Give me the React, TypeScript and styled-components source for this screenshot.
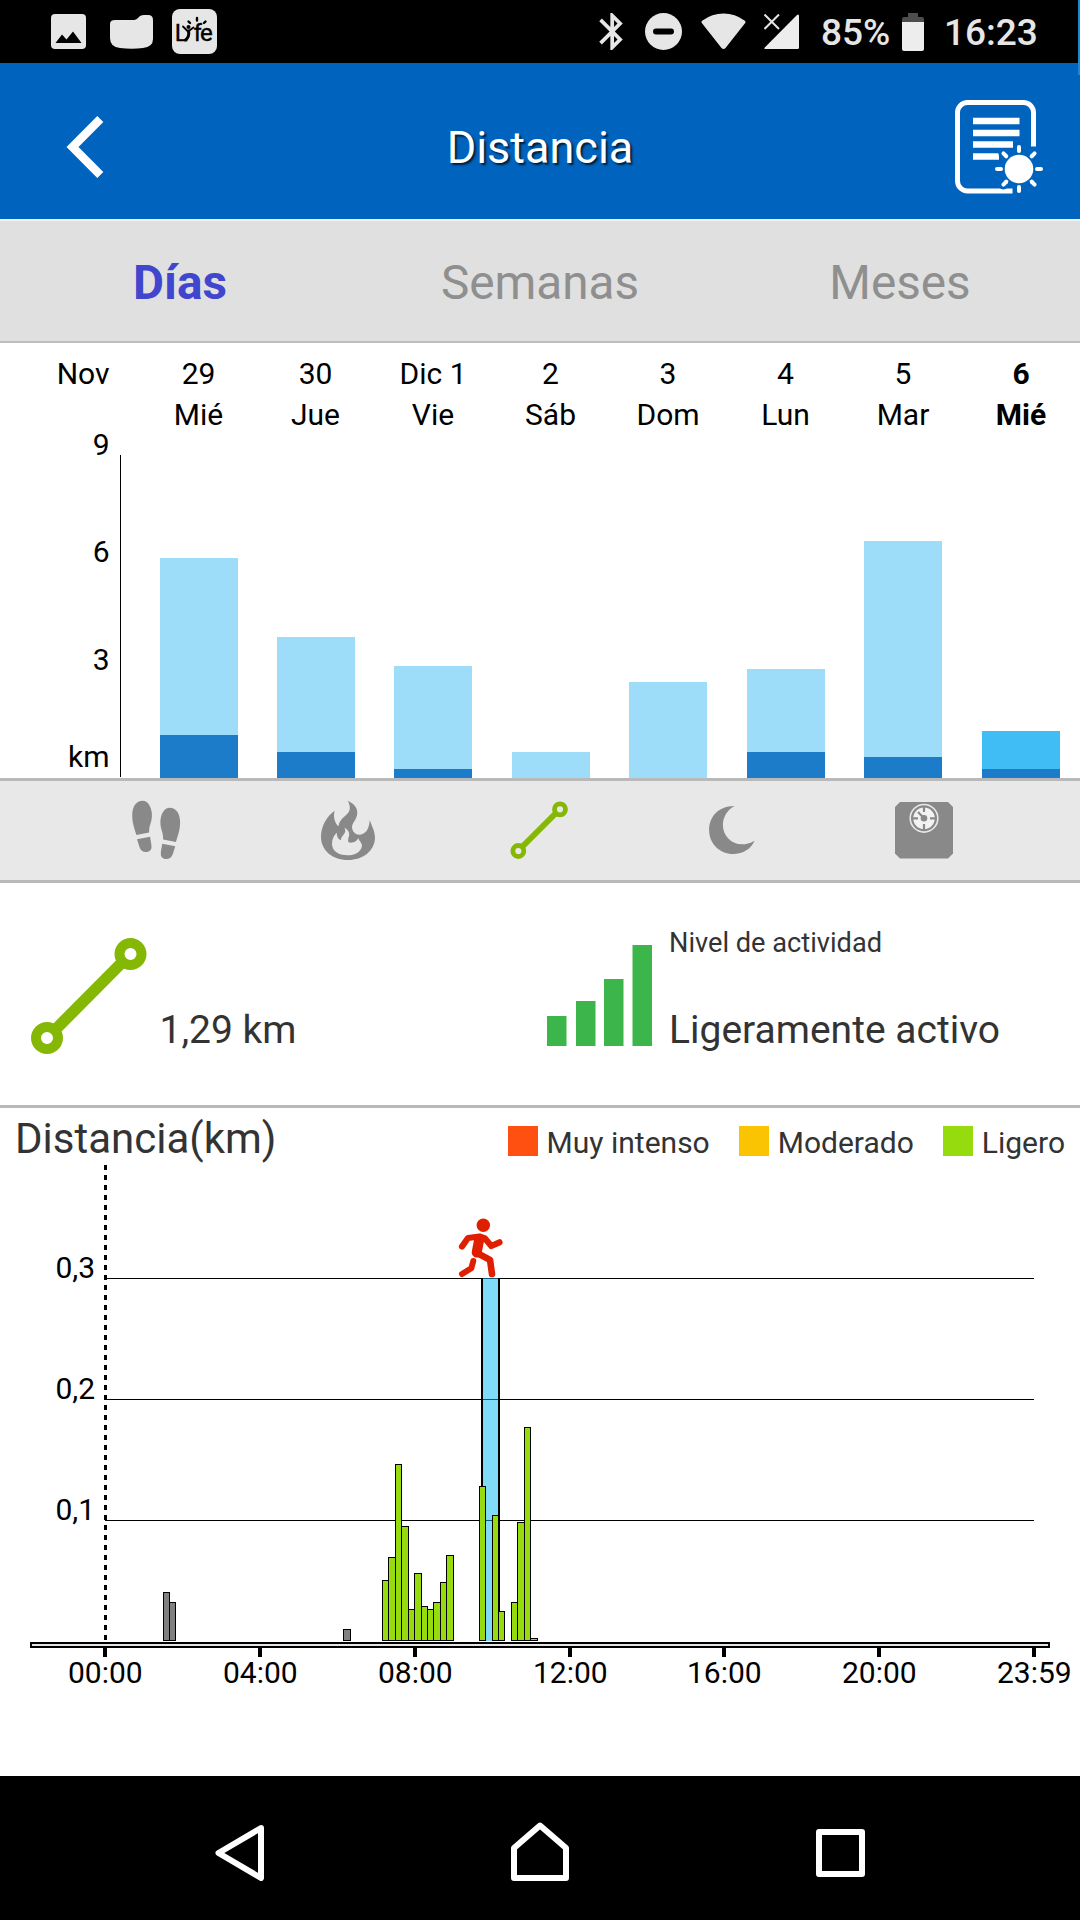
import React from "react";
import styled, { createGlobalStyle } from "styled-components";

const GlobalStyle = createGlobalStyle`
  * { box-sizing: border-box; }
  body { margin: 0; background: #fff; font-family: Roboto, "Liberation Sans", sans-serif; }
  svg { display: block; flex: none; }
`;

const Screen = styled.div`
  width: 1080px;
  height: 1920px;
  display: flex;
  flex-direction: column;
  position: relative;
  overflow: hidden;
  background: #fff;
  color: #000;
`;

const EdgeHandle = styled.div`
  position: absolute;
  top: 0;
  right: 0;
  width: 2px;
  height: 75px;
  background: #1a8ad6;
`;

/* ---------- Status bar ---------- */

const StatusBar = styled.div`
  height: 63px;
  flex: none;
  display: flex;
  justify-content: space-between;
  background: #000;
  color: #e6e6e6;
  padding: 0 43px 0 51px;
`;

const StatusGroup = styled.div`
  display: flex;
  align-items: center;
  height: 63px;
`;

const StatusIcon = styled.span<{ $gap: number }>`
  margin-left: ${(p) => p.$gap}px;
`;

const StatusText = styled.span<{ $gap: number; $width: number }>`
  margin-left: ${(p) => p.$gap}px;
  width: ${(p) => p.$width}px;
  font-size: 37px;
  font-weight: 500;
  line-height: 44px;
  padding-top: 3px;
  white-space: nowrap;
`;

/* ---------- Header ---------- */

const Header = styled.header`
  height: 156px;
  flex: none;
  display: grid;
  grid-template-columns: 1fr auto 1fr;
  align-items: center;
  background: #0063be;
  color: #fff;
`;

const BackButton = styled.div`
  padding: 10px 0 0 64px;
`;

const ReportButton = styled.div`
  display: flex;
  justify-content: flex-end;
  padding: 12px 34px 0 0;
`;

const Title = styled.h1`
  margin: 0;
  padding-top: 13px;
  font-size: 45px;
  line-height: 54px;
  font-weight: 400;
  text-shadow: 2px 2px 2px rgba(0, 0, 0, 0.7);
`;

/* ---------- Tabs ---------- */

const Tabs = styled.nav`
  height: 124px;
  flex: none;
  display: grid;
  grid-template-columns: repeat(3, 1fr);
  border-top: 2px solid #f1f1f1;
  border-bottom: 2px solid #bdbdbd;
  background: #e0e0e0;
`;

const Tab = styled.div<{ $active?: boolean }>`
  text-align: center;
  line-height: 125px;
  font-size: 47.7px;
  font-weight: ${(p) => (p.$active ? 700 : 400)};
  color: ${(p) => (p.$active ? "#4046cd" : "#8f8f8f")};
`;

/* ---------- Daily chart ---------- */

const Daily = styled.section`
  height: 435px;
  flex: none;
  display: flex;
  font-size: 30px;
  line-height: 41px;
`;

const DailyScale = styled.div`
  width: 109.500px;
  padding-top: 10px;
  text-align: right;
`;

const ScaleLabels = styled.div`
  margin-top: 30px;
  display: grid;
  grid-template-rows: 107px 108px 97px 41px;
`;

const AxisLine = styled.div`
  width: 1px;
  height: 322px;
  margin: 112px 19px 0 10.500px;
  background: #000;
`;

const DayGrid = styled.div`
  display: grid;
  grid-template-columns: 117px 117px 118px 117px 118px 117px 118px 118px;
`;

const DayColumn = styled.div<{ $current?: boolean }>`
  display: flex;
  flex-direction: column;
  justify-content: space-between;
  padding-top: 10px;
  text-align: center;
  font-weight: ${(p) => (p.$current ? 700 : 400)};
`;

const DayBar = styled.div<{ $current?: boolean }>`
  width: 78px;
  margin-left: 20px;
  display: flex;
  align-items: flex-end;
  background: ${(p) => (p.$current ? "#40bdf5" : "#9dddfa")};
`;

const DayBarBase = styled.div`
  width: 78px;
  background: #1c7cc9;
`;

/* ---------- Metric selector ---------- */

const MetricBar = styled.nav`
  height: 105px;
  flex: none;
  display: grid;
  grid-template-columns: repeat(5, 192px);
  justify-content: center;
  justify-items: center;
  padding-top: 17px;
  border-top: 3px solid #b9b9b9;
  border-bottom: 3px solid #b9b9b9;
  background: #e8e8e8;
`;

/* ---------- Summary ---------- */

const Summary = styled.section`
  height: 225px;
  flex: none;
  display: grid;
  grid-template-columns: 547px 1fr;
  border-bottom: 3px solid #b9b9b9;
  color: #333;
`;

const SummaryPart = styled.div<{ $left?: number }>`
  display: flex;
  align-items: flex-start;
  padding: 44px 0 0 ${(p) => p.$left ?? 0}px;
`;

const SummaryText = styled.div<{ $gap: number }>`
  height: 126px;
  margin-left: ${(p) => p.$gap}px;
  display: flex;
  flex-direction: column;
  justify-content: space-between;
`;

const SummaryLabel = styled.div`
  font-size: 27.200px;
  line-height: 32px;
`;

const SummaryValue = styled.div`
  font-size: 39px;
  line-height: 46px;
`;

const SummaryIcon = styled.div<{ $top: number }>`
  margin-top: ${(p) => p.$top}px;
`;

/* ---------- Hourly chart ---------- */

const HourlyHead = styled.div`
  height: 57px;
  flex: none;
  display: flex;
  justify-content: space-between;
  padding: 3px 15px 0 15px;
  color: #333;
`;

const HourlyTitle = styled.h2`
  margin: 0;
  font-size: 42px;
  line-height: 56px;
  font-weight: 400;
`;

const Legend = styled.div`
  display: flex;
  padding-top: 15px;
  font-size: 30px;
  line-height: 34px;
`;

const LegendItem = styled.div<{ $color: string }>`
  display: flex;
  margin-left: 29px;
  &::before {
    content: "";
    width: 30px;
    height: 30px;
    margin-right: 9px;
    background: ${(p) => p.$color};
  }
`;

const ChartText = styled.text`
  font-size: 30px;
  fill: #000;
`;

/* ---------- Navigation bar ---------- */

const NavBar = styled.footer`
  height: 144px;
  flex: none;
  display: flex;
  justify-content: space-between;
  padding: 46px 215px 0;
  background: #000;
`;

/* ---------- Data ---------- */

const days = [
  { date: "29", name: "Mié", total: 220, base: 43 },
  { date: "30", name: "Jue", total: 141, base: 26 },
  { date: "Dic 1", name: "Vie", total: 112, base: 9 },
  { date: "2", name: "Sáb", total: 26, base: 0 },
  { date: "3", name: "Dom", total: 96, base: 0 },
  { date: "4", name: "Lun", total: 109, base: 26 },
  { date: "5", name: "Mar", total: 237, base: 21 },
  { date: "6", name: "Mié", total: 47, base: 9, current: true },
];

const IDLE = "#808080";
const LIGHT = "#96db0e";

/* left edge, right edge, top, fill */
const hourBars: [number, number, number, string][] = [
  [163, 170, 1592, IDLE],
  [169, 176, 1602, IDLE],
  [343, 351, 1629, IDLE],
  [382, 389, 1580, LIGHT],
  [388, 396, 1557, LIGHT],
  [395, 402, 1464, LIGHT],
  [401, 409, 1526, LIGHT],
  [408, 415, 1609, LIGHT],
  [414, 422, 1573, LIGHT],
  [421, 428, 1606, LIGHT],
  [427, 434, 1609, LIGHT],
  [433, 441, 1602, LIGHT],
  [440, 447, 1582, LIGHT],
  [446, 454, 1555, LIGHT],
  [479, 486, 1486, LIGHT],
  [492, 499, 1515, LIGHT],
  [498, 505, 1611, LIGHT],
  [511, 518, 1602, LIGHT],
  [517, 525, 1522, LIGHT],
  [524, 531, 1427, LIGHT],
  [530, 538, 1638, LIGHT],
];

const ticks: [number, string][] = [
  [105, "00:00"],
  [260, "04:00"],
  [415, "08:00"],
  [570, "12:00"],
  [724, "16:00"],
  [879, "20:00"],
  [1034, "23:59"],
];

const gridLines: [number, string][] = [
  [1278, "0,3"],
  [1399, "0,2"],
  [1520, "0,1"],
];

/* ---------- Icons ---------- */

const PhotoIcon = () => (
  <svg width="35" height="35" viewBox="0 0 35 35">
    <rect width="35" height="35" rx="4" fill="#e6e6e6" />
    <path d="M4.500 29L11 20.500L15.500 25.500L22 17.500L30.500 29Z" fill="#000" />
  </svg>
);

const FolderIcon = () => (
  <svg width="43" height="34" viewBox="0 0 43 34">
    <path
      d="M0 9Q0 5 5 5H24Q26 5 28 3Q30 0 34 0H38Q43 0 43 5V24Q43 32 33 33Q22 34.500 10 33Q0 32 0 23Z"
      fill="#e6e6e6"
    />
  </svg>
);

const LyfeIcon = () => (
  <svg width="45" height="45" viewBox="0 0 45 45">
    <rect width="45" height="45" rx="8" fill="#e6e6e6" />
    <g fontSize="24" fill="#000" stroke="#000" strokeWidth="0.400">
      <text x="2.800" y="31.500">L</text>
      <text x="21.500" y="31.500">f</text>
      <text x="28" y="31.500">e</text>
    </g>
    <g stroke="#000" fill="none" strokeLinecap="round">
      <path d="M11 17.500L16 22.500L21.500 18.500" strokeWidth="1.800" />
      <path d="M16.600 22Q17.500 28 13.500 31" strokeWidth="3" />
      <path d="M25 9V11.500M16.500 12.500L18 14M33.500 12.500L32 14" strokeWidth="2.400" />
    </g>
    <circle cx="16.500" cy="18" r="2" />
  </svg>
);

const BluetoothIcon = () => (
  <svg width="24" height="37" viewBox="5 2 12.710 20">
    <path
      fill="#e6e6e6"
      d="M17.71 7.71L12 2h-1v7.59L6.41 5 5 6.41 10.59 12 5 17.59 6.41 19 11 14.41V22h1l5.71-5.71-4.3-4.29 4.3-4.29zM13 5.83l1.880 1.880L13 9.590V5.830zm1.880 10.460L13 18.170v-3.760l1.880 1.880z"
    />
  </svg>
);

const DoNotDisturbIcon = () => (
  <svg width="37" height="37" viewBox="0 0 37 37">
    <circle cx="18.500" cy="18.500" r="18.500" fill="#e6e6e6" />
    <rect x="8" y="15.500" width="21" height="6" rx="3" fill="#000" />
  </svg>
);

const WifiIcon = () => (
  <svg width="45" height="37" viewBox="0 0 45 37">
    <path d="M1.200 10.500Q-.500 8.800 1.500 7.500Q11 .500 22.500 .500Q34 .500 43.500 7.500Q45.500 8.800 43.800 10.500L24.500 35Q22.500 37 20.500 35Z" fill="#e6e6e6" />
  </svg>
);

const SignalIcon = () => (
  <svg width="35" height="35" viewBox="0 0 35 35">
    <path d="M35 2V33.500Q35 35 33.500 35H1.500Q-.500 35 1 33.200L33 1Q35 -.500 35 2Z" fill="#ededed" />
    <path d="M0.500 0.500L15 15M15 0.500L0.500 15" stroke="#e6e6e6" strokeWidth="2" />
  </svg>
);

const BatteryIcon = () => (
  <svg width="22" height="38" viewBox="0 0 22 38">
    <path d="M6 0H16V4H20Q22 4 22 6V10H0V6Q0 4 2 4H6Z" fill="#4d4d4d" />
    <path d="M0 9H22V36Q22 38 20 38H2Q0 38 0 36Z" fill="#ededed" />
  </svg>
);

const BackIcon = () => (
  <svg width="42" height="66" viewBox="0 0 42 66">
    <path d="M36.300 6L8.500 34L36.300 62" fill="none" stroke="#fff" strokeWidth="8.500" />
  </svg>
);

const rays = [0, 45, 90, 135, 180, 225, 270, 315];

const ReportIcon = () => (
  <svg width="91" height="98" viewBox="955 98 91 98">
    <g fill="none" stroke="#fff">
      <path
        d="M1033.500 146.500V112.500A10 10 0 0 0 1023.500 102.500H967.500A10 10 0 0 0 957.500 112.500V181A10 10 0 0 0 967.500 191H1012.500"
        strokeWidth="5"
      />
      <path d="M973 121H1019.500M973 133H1019.500M973 144.500H1013M973 156.500H999" strokeWidth="6.500" />
    </g>
    <circle cx="1019" cy="169" r="19" fill="#0063be" />
    {rays.map((angle) => (
      <path
        key={angle}
        d="M1019 152V147"
        stroke="#0063be"
        strokeWidth="10"
        strokeLinecap="round"
        transform={`rotate(${angle} 1019 169)`}
      />
    ))}
    {rays.map((angle) => (
      <path
        key={angle}
        d="M1019 151V147"
        stroke="#fff"
        strokeWidth="4"
        strokeLinecap="round"
        transform={`rotate(${angle} 1019 169)`}
      />
    ))}
    <circle cx="1019" cy="169" r="14.300" fill="#fff" />
  </svg>
);

const GREY = "#898989";
const GREEN = "#85b804";

const MetricSvg = ({ children }: { children: React.ReactNode }) => (
  <svg width="64" height="64" viewBox="0 0 64 64">
    {children}
  </svg>
);

const Foot = ({ transform }: { transform?: string }) => (
  <g transform={transform} fill={GREY}>
    <path d="M18.500 2.700C24 2.700 27.500 9 27.900 16C28.200 25 25 26 25.100 34.600L12.400 37C10 29 8.200 25 8.200 17C8.400 8 12.500 2.700 18.500 2.700Z" />
    <path d="M13 41.200L26.100 38.800C26.500 43 27.500 45 27.500 49C27.500 52.500 25 54 22 54C15.500 54 15.500 48 13 41.200Z" />
  </g>
);

const StepsIcon = () => (
  <MetricSvg>
    <Foot />
    <Foot transform="translate(64.300 7) scale(-1 1)" />
  </MetricSvg>
);

const FlameIcon = () => (
  <MetricSvg>
    <path
      fill={GREY}
      fillRule="evenodd"
      d="M31.800 2.700C38 5.500 42 10 41.200 16C40.500 22 36.500 24 36 29C36 33 39 36.500 43 36.700C50 36.500 53 31 53.800 22C56 29 59 33 59 40C58.500 53 47 62 32 62C16 62 5 52 5 39C5 28 11 18 18.700 12.700C17 18 18.500 25 22.500 28.300C23.500 19 33 18 33.800 11C34 7.500 33 5 31.800 2.700ZM28.300 29.700C32 31.500 33.800 34.500 33 38C32.500 40 31.500 42 32.500 44.300C37 45.500 40.500 43.500 42.300 40C43 43 46 44.500 46 48C45 54 39 57.300 31.500 57.300C22 57.300 16 52.500 16 46C16 41 18 37 20.800 34.700C20.800 38 22 41.500 25 42C25 38 29.500 36 29.300 33C29.300 31.500 28.800 30.500 28.300 29.700Z"
    />
  </MetricSvg>
);

const DistanceIcon = () => (
  <MetricSvg>
    <g fill="none" stroke={GREEN}>
      <path d="M14 49L48 15" strokeWidth="6" />
      <circle cx="10.300" cy="53" r="5.500" strokeWidth="4.800" />
      <circle cx="52" cy="11.300" r="5.500" strokeWidth="4.800" />
    </g>
  </MetricSvg>
);

const MoonIcon = () => (
  <MetricSvg>
    <path
      fill={GREY}
      d="M34.600 8C18 8 9.100 19 9.100 32C9.100 46 20 56 33 56C43 56 51.500 50.500 54.500 42.700C50 45.500 46 46.300 42 46.300C31 46.300 22.900 37.500 22.900 27C22.900 19 27.500 11.500 34.600 8Z"
    />
  </MetricSvg>
);

const WeightIcon = () => (
  <MetricSvg>
    <path d="M8 4H56L61 9V55.500L56 60.500H8L3 55.500V9Z" fill={GREY} />
    <circle cx="32" cy="20.300" r="13.800" fill="none" stroke="#e8e8e8" strokeWidth="1.600" />
    <circle cx="32" cy="20.300" r="10.800" fill="#f2f2f2" />
    <path d="M32 9V14M32 26V32M20.500 20.300H26M38 20.300H43.500M26 14L32 20.300" stroke={GREY} strokeWidth="2.200" />
    <circle cx="32" cy="20.300" r="3.300" fill={GREY} />
  </MetricSvg>
);

const DistanceLarge = () => (
  <svg width="116" height="116" viewBox="0 0 116 116">
    <g fill="none" stroke={GREEN}>
      <path d="M23 93L92.500 23" strokeWidth="11.500" />
      <circle cx="16" cy="100" r="11" strokeWidth="10" />
      <circle cx="99.500" cy="16" r="11" strokeWidth="10" />
    </g>
  </svg>
);

const ActivityIcon = () => (
  <svg width="105" height="101" viewBox="0 0 105 101">
    <path d="M0 71H19.500V101H0ZM29 56H48.500V101H29ZM57 34H76.500V101H57ZM85.500 0H105V101H85.500Z" fill="#3cb54a" />
  </svg>
);

const Runner = () => (
  <g stroke="#e01e00" fill="none" strokeLinecap="round" strokeLinejoin="round" transform="translate(-0.500 0)">
    <circle cx="483.800" cy="1225.300" r="6.700" fill="#e01e00" stroke="none" />
    <path d="M462.500 1246.500L468.500 1238L480 1236.500L485.500 1238.500L491.800 1246L500 1242.300" strokeWidth="6.200" />
    <path d="M479.800 1239L477.200 1252.500" strokeWidth="10" />
    <path d="M477.500 1253L490.500 1259.800L492.500 1274" strokeWidth="6.600" />
    <path d="M473.800 1261L471.800 1268.200L462.500 1274" strokeWidth="6" />
  </g>
);

const HourlyChart = () => (
  <svg width="1080" height="611" viewBox="0 1165 1080 611">
    <path d="M105.500 1165V1641" stroke="#000" strokeWidth="3" strokeDasharray="5 5" />
    {gridLines.map(([y, label]) => (
      <g key={label}>
        <rect x="105" y={y} width="929" height="1" />
        <ChartText x="55.500" y={y}>{label}</ChartText>
      </g>
    ))}
    <rect x="483" y="1278" width="15" height="363" fill="rgb(1,183,243)" fillOpacity="0.500" />
    <path d="M482 1278V1641M499 1278V1641" stroke="#000" strokeWidth="2" />
    <Runner />
    {hourBars.map(([left, right, top, fill]) => (
      <rect
        key={left}
        x={left + 0.5}
        y={top + 0.5}
        width={right - left - 1}
        height={1640 - top}
        fill={fill}
        stroke="#000"
      />
    ))}
    <rect x="31" y="1643" width="1018" height="4" fill="#e4e4e4" stroke="#000" strokeWidth="2" />
    {ticks.map(([x, label]) => (
      <g key={label}>
        <rect x={x - 2} y="1648" width="4" height="9" />
        <ChartText x={x + 0.3} y="1683" textAnchor="middle">{label}</ChartText>
      </g>
    ))}
  </svg>
);

export default function App() {
  return (
    <Screen>
      <GlobalStyle />
      <StatusBar>
        <StatusGroup>
          <StatusIcon $gap={0}><PhotoIcon /></StatusIcon>
          <StatusIcon $gap={24}><FolderIcon /></StatusIcon>
          <StatusIcon $gap={19}><LyfeIcon /></StatusIcon>
        </StatusGroup>
        <StatusGroup>
          <StatusIcon $gap={0}><BluetoothIcon /></StatusIcon>
          <StatusIcon $gap={22}><DoNotDisturbIcon /></StatusIcon>
          <StatusIcon $gap={18.5}><WifiIcon /></StatusIcon>
          <StatusIcon $gap={18.5}><SignalIcon /></StatusIcon>
          <StatusText $gap={22} $width={70}>85%</StatusText>
          <StatusIcon $gap={11}><BatteryIcon /></StatusIcon>
          <StatusText $gap={20} $width={93}>16:23</StatusText>
        </StatusGroup>
      </StatusBar>

      <Header>
        <BackButton><BackIcon /></BackButton>
        <Title>Distancia</Title>
        <ReportButton><ReportIcon /></ReportButton>
      </Header>

      <Tabs>
        <Tab $active>Días</Tab>
        <Tab>Semanas</Tab>
        <Tab>Meses</Tab>
      </Tabs>

      <Daily>
        <DailyScale>
          <div>Nov</div>
          <ScaleLabels>
            <span>9</span>
            <span>6</span>
            <span>3</span>
            <span>km</span>
          </ScaleLabels>
        </DailyScale>
        <AxisLine />
        <DayGrid>
          {days.map((day) => (
            <DayColumn key={day.date} $current={day.current}>
              <div>
                <div>{day.date}</div>
                <div>{day.name}</div>
              </div>
              <DayBar $current={day.current} style={{ height: day.total }}>
                <DayBarBase style={{ height: day.base }} />
              </DayBar>
            </DayColumn>
          ))}
        </DayGrid>
      </Daily>

      <MetricBar>
        <StepsIcon />
        <FlameIcon />
        <DistanceIcon />
        <MoonIcon />
        <WeightIcon />
      </MetricBar>

      <Summary>
        <SummaryPart $left={31}>
          <SummaryIcon $top={11}><DistanceLarge /></SummaryIcon>
          <SummaryText $gap={12.5}>
            <span />
            <SummaryValue>1,29 km</SummaryValue>
          </SummaryText>
        </SummaryPart>
        <SummaryPart>
          <SummaryIcon $top={18}><ActivityIcon /></SummaryIcon>
          <SummaryText $gap={17}>
            <SummaryLabel>Nivel de actividad</SummaryLabel>
            <SummaryValue>Ligeramente activo</SummaryValue>
          </SummaryText>
        </SummaryPart>
      </Summary>

      <HourlyHead>
        <HourlyTitle>Distancia(km)</HourlyTitle>
        <Legend>
          <LegendItem $color="#ff5011">Muy intenso</LegendItem>
          <LegendItem $color="#fbc403">Moderado</LegendItem>
          <LegendItem $color={LIGHT}>Ligero</LegendItem>
        </Legend>
      </HourlyHead>
      <HourlyChart />

      <NavBar>
        <svg width="49" height="59" viewBox="215 1822 49 59">
          <path d="M261 1828L218.500 1853L261 1878Z" fill="none" stroke="#fff" strokeWidth="6" strokeLinejoin="round" />
        </svg>
        <svg width="58" height="59" viewBox="511 1822 58 59">
          <path d="M540 1825.500L566 1848V1878H514V1848Z" fill="none" stroke="#fff" strokeWidth="6" strokeLinejoin="round" />
        </svg>
        <svg width="49" height="59" viewBox="816 1822 49 59">
          <rect x="819" y="1832" width="43" height="42" fill="none" stroke="#fff" strokeWidth="6" strokeLinejoin="round" />
        </svg>
      </NavBar>
      <EdgeHandle />
    </Screen>
  );
}
